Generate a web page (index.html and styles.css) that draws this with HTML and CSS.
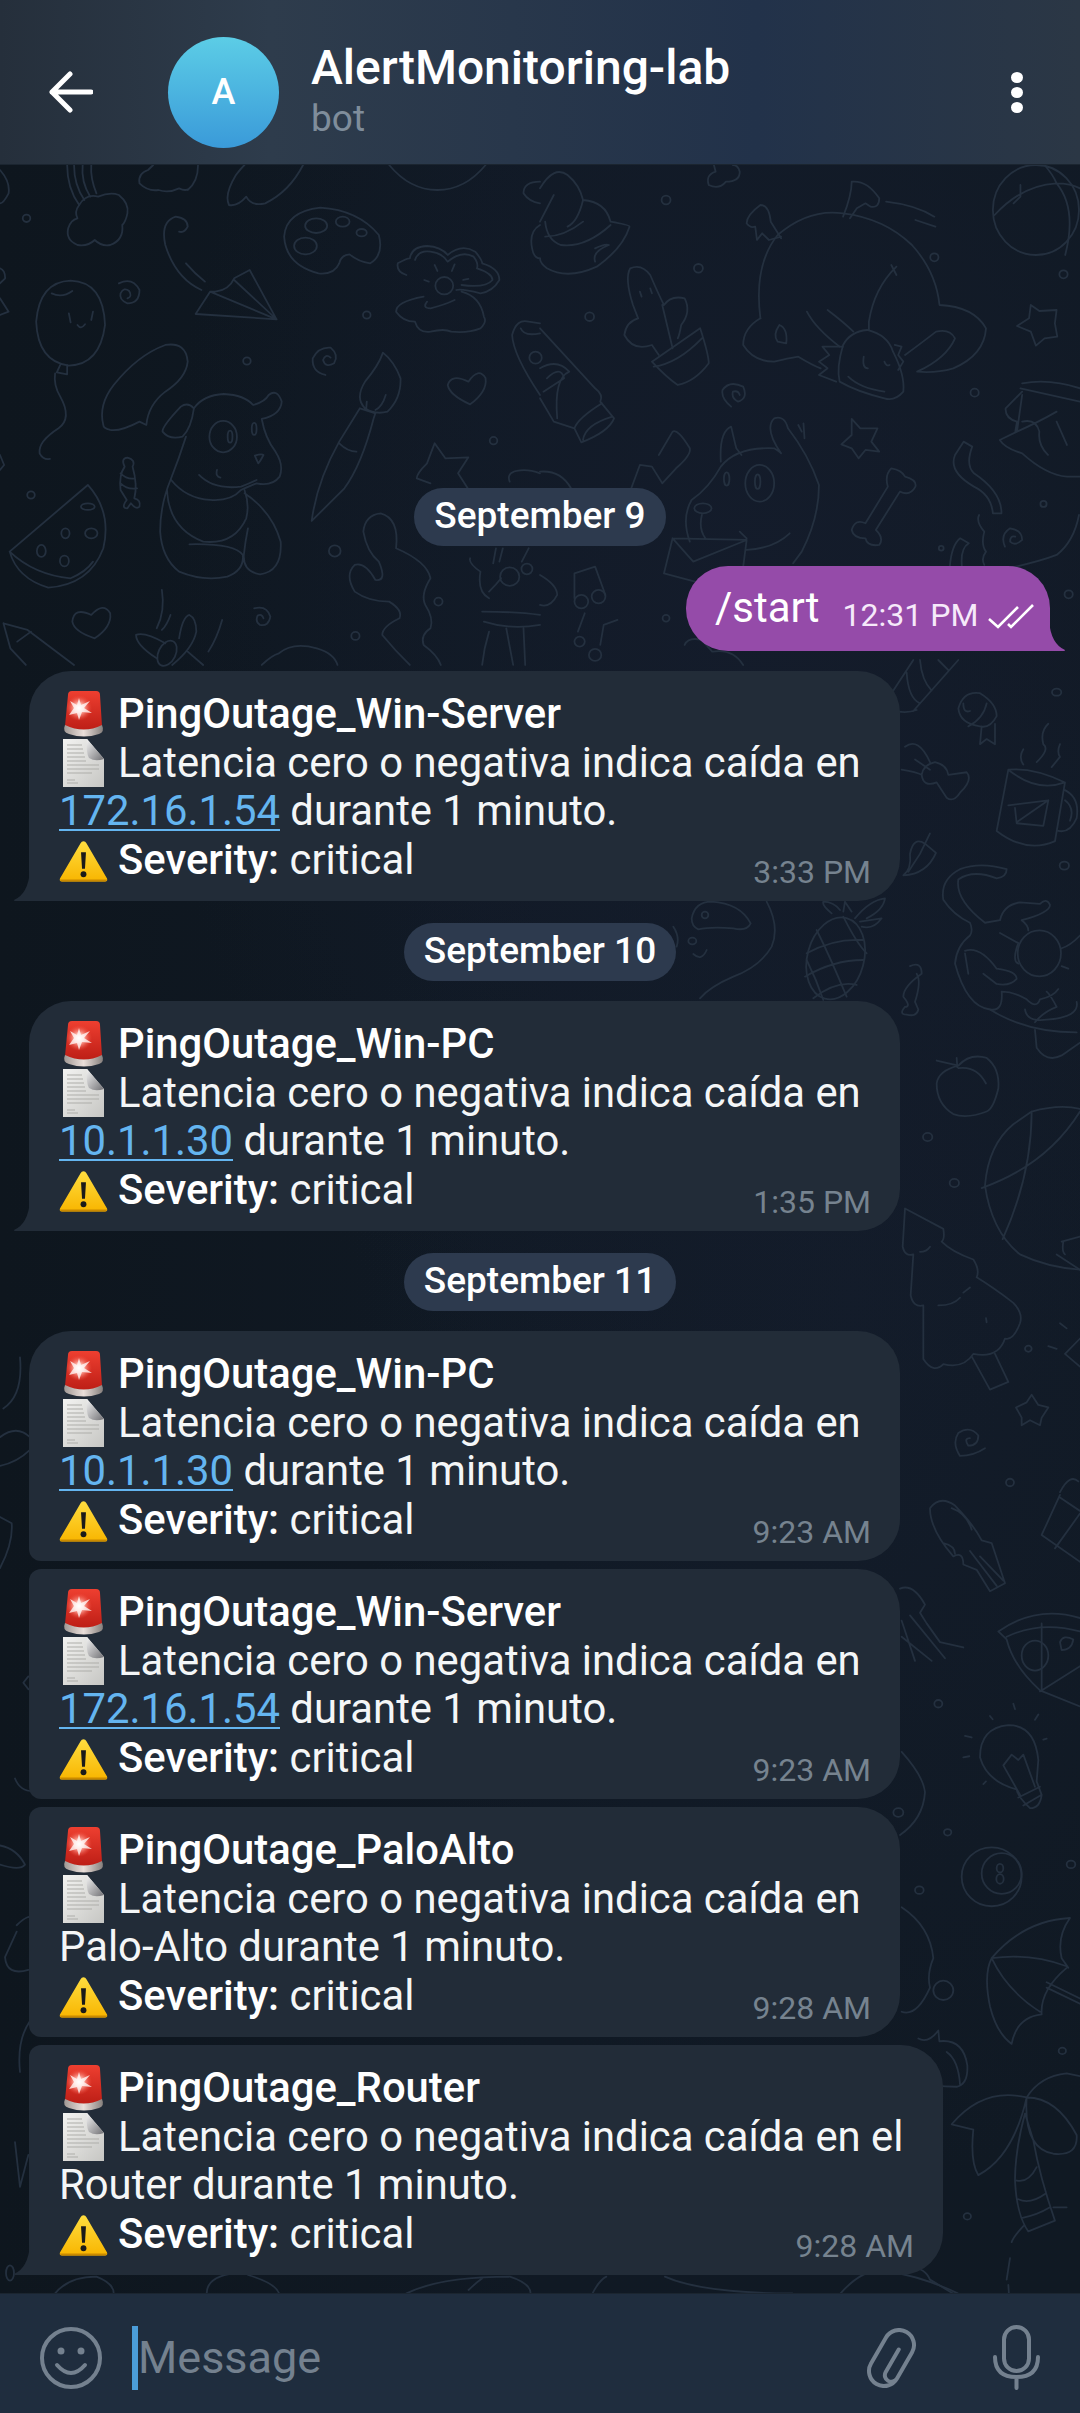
FILE: index.html
```html
<!DOCTYPE html>
<html>
	<head>
		<meta charset="utf-8">
		<title>AlertMonitoring-lab</title>
		<link rel="stylesheet" href="styles.css">
	</head>
	<body>
		<svg width="0" height="0" class="defs">
			<defs>
				<linearGradient id="red" x1="0" y1="0" x2="0" y2="1"><stop offset="0" stop-color="#ee3f30"/><stop offset="1" stop-color="#bd1e16"/></linearGradient>
				<linearGradient id="base" x1="0" y1="0" x2="1" y2="0"><stop offset="0" stop-color="#a09894"/><stop offset=".5" stop-color="#eadfda"/><stop offset="1" stop-color="#857f7c"/></linearGradient>
				<radialGradient id="flash"><stop offset="0" stop-color="#fff"/><stop offset=".35" stop-color="#ffb5aa"/><stop offset="1" stop-color="#f0493a" stop-opacity="0"/></radialGradient>
				<linearGradient id="yellow" x1="0" y1="0" x2="0" y2="1"><stop offset="0" stop-color="#ffdd3f"/><stop offset="1" stop-color="#f8b500"/></linearGradient>
				<linearGradient id="paper" x1="0" y1="0" x2="1" y2="1"><stop offset="0" stop-color="#f3f3f1"/><stop offset="1" stop-color="#c6c6c3"/></linearGradient>
				<linearGradient id="fold" x1="0" y1="0" x2="1" y2="1"><stop offset="0" stop-color="#f4f4f4"/><stop offset="1" stop-color="#707074"/></linearGradient>
				<symbol id="siren" viewBox="0 0 49 49">
					<path d="M9 5Q9 1 13 1H37Q41 1 41 5L43 36Q25 44 6 36Z" fill="url(#red)"/>
					<circle cx="20" cy="18" r="13" fill="url(#flash)"/>
					<path d="M20 8L22 15 31 11 25 18 33 23 23 22 20 30 18 23 10 25 15 18 11 11 18 15Z" fill="#fff" opacity=".75"/>
					<path d="M6 35Q25 44 43 35Q46 42 40 44Q25 49 10 44Q3 42 6 35Z" fill="url(#base)"/>
				</symbol>
				<symbol id="page" viewBox="0 0 49 49">
					<path d="M4 1H28L45 21V49H4Z" fill="url(#paper)"/>
					<path d="M28 1Q27 16 30 20Q36 24 45 21Z" fill="url(#fold)"/>
					<path d="M8 7H23M8 11H24M8 15H25M8 19H26M8 23H27M8 27H40M8 31H40M8 35H33M8 42H16M8 45H19" stroke="#adadaa" stroke-width="1.200"/>
				</symbol>
				<symbol id="warn" viewBox="0 -4 50 49">
					<path d="M25 2Q27 2 28 4L49 40Q50 43 47 43H3Q0 43 1 40L22 4Q23 2 25 2Z" fill="url(#yellow)"/>
					<path d="M1 41Q1 43 3 43H47Q49 43 49 41Z" fill="#c98a00"/>
					<path d="M22.500 13H27.500L26.500 30H23.500Z" fill="#1a1a1a"/>
					<circle cx="25" cy="35.500" r="3" fill="#1a1a1a"/>
				</symbol>
				<symbol id="seen" viewBox="0 0 46 26">
					<path d="M1 16L10 24 30 4M20 21L23 24 45 2" fill="none" stroke="#fff" stroke-width="2.600"/>
				</symbol>
				<symbol id="tail" viewBox="0 0 30 30">
					<path d="M30 0V30H1Q0 30 0 29Q14 23 16 0Z"/>
				</symbol>
			</defs>
		</svg>

		<div class="phone">
			<svg class="doodles" viewBox="0 0 1080 2413" fill="none" stroke-linecap="round" stroke-linejoin="round">
				<!-- top left part -->
				<g transform="translate(0 165) scale(.3444 .3333)">
					<path d="M195 0Q195 70 230 120M215 0Q215 60 245 105M240 0Q235 50 262 95M265 0Q262 40 280 85"/>
					<path d="M230 120Q250 85 285 95Q320 80 345 90Q375 115 370 145Q365 170 355 180Q360 225 320 240Q295 245 275 225Q255 245 225 240Q190 225 198 190Q205 165 225 160Q215 140 230 120Z"/>
					<path d="M405 55Q400 25 430 15L445 0M545 75Q575 50 575 0M405 55Q430 80 460 75Q490 85 520 70Q540 80 550 70"/>
					<path d="M665 120Q650 90 685 30Q700 10 710 0M665 120Q690 125 715 95Q730 125 770 115Q840 80 880 0"/>
					<path d="M1130 0Q1190 75 1270 75Q1350 75 1410 0M1568 50Q1520 50 1520 85Q1535 110 1568 115M1568 180Q1535 200 1545 250Q1550 280 1568 280M0 15Q30 50 25 85Q10 115 0 115M0 310Q15 315 15 340L0 355M0 400L25 440 0 450M0 870L12 900 0 915"/>
					<circle cx="77" cy="160" r="11"/><circle cx="1065" cy="450" r="11"/><circle cx="717" cy="588" r="11"/><circle cx="1433" cy="827" r="11"/><circle cx="90" cy="990" r="11"/><circle cx="972" cy="1158" r="17"/><circle cx="1273" cy="1310" r="12"/><circle cx="1032" cy="1413" r="12"/>
					<path d="M345 355Q385 335 405 375Q405 415 370 415Q345 405 350 385Q360 365 375 378Q385 395 370 400"/>
					<path d="M945 630Q905 620 908 580Q925 545 960 548Q985 570 970 595Q945 610 938 585Q945 565 960 578"/>
					<path d="M738 1330Q775 1320 785 1355Q780 1385 755 1380Q740 1370 748 1352Q760 1345 765 1360"/>
					<path d="M585 375Q510 340 480 240Q465 170 510 155Q545 160 545 185Q535 205 520 200M540 295Q565 325 595 350"/>
					<path d="M568 447L610 380 625 380Q665 375 680 340L725 315 803 463ZM610 380L803 463M680 345L803 463"/>
					<path d="M825 215Q830 140 930 128Q1040 135 1100 210Q1115 270 1075 295Q1040 290 1015 268Q990 270 985 295Q970 330 925 325Q830 300 825 215Z"/>
					<ellipse cx="918" cy="182" rx="32" ry="22"/><ellipse cx="995" cy="170" rx="20" ry="15"/><ellipse cx="1050" cy="203" rx="15" ry="11"/><ellipse cx="887" cy="243" rx="33" ry="25"/>
					<path d="M1180 330Q1150 320 1155 295Q1180 280 1190 280Q1195 245 1240 243Q1280 245 1300 270Q1340 235 1380 260Q1400 285 1400 295Q1450 310 1450 345Q1430 380 1395 385Q1340 370 1325 375M1205 285Q1215 255 1250 260Q1285 265 1300 290Q1340 255 1375 275Q1390 295 1385 310Q1430 325 1430 345Q1410 370 1340 360M1230 395Q1150 410 1150 440Q1170 470 1205 470Q1215 505 1250 500Q1290 490 1310 500Q1360 505 1395 490Q1415 470 1405 455Q1395 395 1340 380M1240 410Q1225 430 1250 430Q1290 420 1320 405M1262 300L1270 318M1320 298L1312 318M1232 345L1245 350M1345 345L1360 342"/>
					<circle cx="1290" cy="362" r="26"/>
					<path d="M205 347Q300 350 305 480Q290 600 200 602Q110 590 105 470Q115 350 205 347ZM150 385Q180 400 210 378M200 445L205 472M270 440L265 465M225 480Q235 495 247 478M175 600L165 622 195 628 195 600M160 625Q155 660 175 695Q210 760 170 790Q110 830 115 865Q125 885 145 882"/>
					<path d="M300 780Q285 720 330 660Q400 570 480 540Q540 530 545 590Q540 640 480 680Q430 720 425 780L405 770Q350 800 320 795Q300 790 300 780Z"/>
					<path d="M563 730Q590 690 650 687Q710 690 735 720Q770 710 780 690Q805 670 818 710Q815 750 760 762Q770 820 800 860Q825 900 812 935Q790 965 745 955Q710 970 700 975Q670 1010 610 1005Q540 1000 497 945"/>
					<path d="M563 730Q545 710 525 725Q470 785 472 800Q490 825 530 815Q555 790 563 730M540 815Q520 880 495 945Q465 1020 465 1100Q470 1180 520 1220Q590 1250 660 1235Q710 1215 705 1170Q680 1135 550 1138M485 975Q490 1090 590 1130Q680 1140 715 1060Q725 1020 710 975M710 985Q790 1040 815 1130Q820 1220 755 1228Q705 1220 708 1170Q712 1130 720 1090"/>
					<ellipse cx="648" cy="815" rx="40" ry="47"/><ellipse cx="668" cy="815" rx="7" ry="18"/><ellipse cx="738" cy="792" rx="7" ry="18"/>
					<path d="M578 930Q620 975 700 965Q725 955 745 945M630 915Q625 935 640 938M740 872Q760 865 765 870Q755 890 750 895Q745 885 740 872Z"/>
					<path d="M1112 563Q1100 600 1060 650Q1030 700 1060 730Q1090 750 1125 740Q1165 700 1163 640Q1145 590 1112 563ZM1045 730L1090 745 1085 760Q1050 900 1000 970L905 1068Q920 950 985 830L1045 730M985 835Q1010 860 1035 860M1065 710L1063 735M1120 690Q1110 725 1090 735"/>
					<path d="M1360 650Q1310 625 1300 660Q1305 690 1365 718Q1415 680 1410 640Q1390 605 1360 650Z"/>
					<path d="M1262 835L1293 880 1360 877 1330 925 1358 970M1262 835Q1245 880 1240 895Q1210 925 1210 940L1250 955"/>
					<path d="M370 878Q350 880 362 905Q345 930 350 975Q365 1000 368 1005Q350 1030 370 1030L380 1015Q395 1035 405 1025Q410 1005 390 1000Q400 960 385 905Q395 885 370 878ZM350 925Q370 945 392 940M350 955Q370 975 398 970"/>
					<path d="M255 960L28 1160Q50 1240 140 1268Q260 1260 300 1150Q325 1040 255 960ZM28 1160Q100 1230 205 1240Q250 1220 270 1190"/>
					<ellipse cx="255" cy="1025" rx="20" ry="10"/><ellipse cx="190" cy="1105" rx="12" ry="15"/><ellipse cx="265" cy="1105" rx="18" ry="15"/><ellipse cx="120" cy="1158" rx="13" ry="18"/><ellipse cx="187" cy="1188" rx="13" ry="16"/>
					<path d="M1105 1045Q1060 1050 1055 1100Q1065 1160 1100 1190Q1125 1250 1090 1245Q1060 1190 1030 1200Q1000 1230 1030 1280Q1070 1310 1130 1310Q1170 1335 1160 1360Q1110 1385 1110 1410Q1150 1460 1190 1500M1105 1045Q1160 1060 1150 1150Q1240 1190 1250 1240Q1220 1290 1235 1320Q1260 1360 1250 1390Q1220 1410 1230 1440Q1270 1470 1280 1500"/>
					<path d="M265 1350Q215 1325 210 1370Q215 1400 275 1420Q325 1385 320 1345Q300 1310 265 1350Z"/>
					<path d="M10 1375L80 1395 215 1500M10 1375L30 1450 75 1500M50 1430L90 1400"/>
					<path d="M470 1275Q480 1340 455 1390M495 1350Q485 1380 470 1395M645 1365Q630 1420 605 1460M395 1410Q420 1400 480 1435M395 1410Q395 1440 455 1480M520 1420Q530 1355 550 1350Q570 1360 570 1400Q560 1450 500 1500M545 1460L590 1500"/>
					<ellipse cx="485" cy="1465" rx="25" ry="40" transform="rotate(25 485 1465)"/>
					<path d="M760 1500Q790 1470 810 1465Q850 1430 920 1450Q970 1465 980 1500"/>
					<path d="M1440 1150L1432 1195M1460 1150L1450 1190M1535 1150L1515 1190M1365 1180Q1360 1195 1395 1220Q1385 1280 1420 1300M1420 1280Q1440 1260 1455 1240M1400 1340Q1500 1340 1568 1350M1405 1370Q1480 1395 1568 1380M1420 1400Q1405 1450 1400 1500M1470 1390L1490 1500M1520 1390L1525 1500"/>
					<circle cx="1480" cy="1235" r="28"/><circle cx="1530" cy="1212" r="16"/>
					<path d="M1480 950Q1470 925 1500 918Q1530 910 1568 925M1568 690Q1490 570 1487 510Q1500 460 1535 470L1568 475M1512 490Q1520 515 1568 505"/>
					<circle cx="1555" cy="578" r="18"/>
				</g>

				<!-- top right part -->
				<g transform="translate(540 165) scale(.3444 .3333)">
					<path d="M0 70Q40 0 80 30Q115 60 125 105Q190 110 205 170Q260 180 260 185Q240 250 165 305Q80 345 20 310Q0 295 0 280M125 105Q110 170 80 185M15 215Q70 215 125 170M15 170Q20 225 60 240Q130 250 205 180M40 90L0 170M160 250Q190 235 200 240Q150 260 160 290"/>
					<path d="M490 60Q480 30 510 20L505 0M490 60Q520 75 540 50Q580 50 580 20Q575 0 560 0"/>
					<circle cx="366" cy="105" r="13"/><circle cx="460" cy="310" r="13"/><circle cx="144" cy="455" r="13"/><circle cx="1145" cy="277" r="12"/><circle cx="1520" cy="328" r="12"/><circle cx="1262" cy="683" r="12"/><circle cx="1462" cy="1017" r="9"/><circle cx="1165" cy="1150" r="7"/><circle cx="1535" cy="1288" r="12"/><circle cx="366" cy="1360" r="10"/>
					<path d="M262 310Q295 295 320 330Q345 390 360 420Q380 390 420 400Q440 440 410 480Q405 510 400 520M262 310Q245 340 270 420L285 460Q250 470 245 510Q270 560 325 540L345 570M355 420L385 550"/>
					<path d="M325 590L465 490Q490 570 490 595Q450 650 400 660Q370 640 325 590ZM330 605Q400 595 470 520M290 380L295 395M320 370L325 385"/>
					<path d="M640 460Q620 300 690 210Q780 130 880 145Q1000 160 1080 240Q1150 320 1160 420Q1260 425 1295 490Q1290 570 1200 610Q1150 625 1095 620Q1180 580 1205 520Q1190 490 1150 500Q1100 540 1060 570"/>
					<path d="M640 460Q590 490 590 540Q620 590 680 590Q720 580 750 575Q790 600 815 610"/>
					<path d="M880 155Q905 90 905 50Q950 45 985 100Q985 130 960 125L945 115 920 130 900 160M700 220L670 170Q665 120 640 120Q600 150 600 175Q610 190 625 185L630 225 645 205 665 225 700 215M1005 110Q1090 120 1145 155M1090 165L1148 185"/>
					<path d="M880 540Q900 500 950 495Q1010 510 1025 560Q1060 630 1055 680Q1030 710 1000 700Q920 680 870 650Q860 610 880 540ZM880 545L820 545 840 570 810 590 835 610 810 630 860 650M1030 540L1050 545 1040 570 1055 590 1040 615M940 575Q935 610 952 610M1000 590Q1005 605 1015 600M895 635Q930 670 1000 680"/>
					<path d="M1035 305Q970 370 955 470L955 495M1020 300L1035 330M775 440Q800 490 870 545M835 435Q880 470 910 500M695 480Q675 510 690 530L715 535Q720 490 695 480"/>
					<ellipse cx="1440" cy="135" rx="125" ry="135"/>
					<path d="M1320 150Q1400 60 1500 55Q1540 55 1568 70M1500 55Q1560 130 1525 270M1395 60L1395 95 1375 115M1465 0Q1490 30 1500 55"/>
					<path d="M0 490L160 670Q185 690 175 710L215 760Q200 800 120 832L100 790 40 770Q0 700 0 700M100 790Q110 760 180 715M0 610Q50 580 85 620Q40 640 50 760M20 640Q60 600 70 640L10 680M125 825Q130 780 210 755"/>
					<path d="M1425 420L1450 438 1500 435 1495 475 1502 515 1465 520 1440 542 1425 500 1385 483 1420 460Z"/>
					<path d="M905 762L930 790 980 790 962 830 985 860 945 855 925 880 905 850 875 838 905 810Z"/>
					<path d="M555 725Q525 700 530 675Q550 645 590 665Q605 700 575 710Q555 700 560 680Q575 675 580 690M1350 1145Q1335 1110 1365 1090Q1400 1095 1400 1125Q1380 1145 1365 1130Q1365 1110 1380 1115"/>
					<path d="M1400 655Q1480 640 1568 670M1395 670Q1480 690 1568 710M1400 680L1352 730Q1350 760 1385 770L1380 800M1400 690L1385 800 1335 825Q1350 850 1400 865Q1470 930 1530 935L1568 935M1400 770Q1440 760 1450 800Q1445 840 1475 870M1500 770L1530 840M1385 800Q1450 770 1500 740"/>
					<path d="M1230 830L1255 845Q1235 900 1260 925Q1340 980 1340 1045L1315 1045Q1310 990 1260 965Q1185 920 1205 870Z"/>
					<path d="M1275 1050Q1265 1070 1290 1100Q1280 1140 1295 1160Q1280 1180 1290 1200M1190 1205Q1195 1140 1220 1120L1245 1135Q1220 1150 1225 1205M1360 1210Q1450 1190 1500 1170Q1550 1130 1565 1050"/>
					<path d="M435 1130Q410 1060 440 1005Q490 970 525 905Q570 845 680 850Q695 860 700 865Q650 790 680 760Q710 750 720 790Q780 870 810 960Q810 1060 760 1160L735 1195M525 890Q520 800 555 785Q565 830 570 850L585 870"/>
					<ellipse cx="638" cy="955" rx="42" ry="55"/><ellipse cx="632" cy="950" rx="8" ry="22"/><ellipse cx="542" cy="942" rx="8" ry="20"/><ellipse cx="473" cy="1030" rx="25" ry="15"/>
					<path d="M470 1050Q460 1090 480 1120M385 1120L360 1225 450 1250M385 1120L445 1190 600 1125 590 1205M385 1120L600 1125M600 1155Q680 1150 725 1105M580 1100L600 1120M750 780L760 800M765 775L768 820"/>
					<path d="M1010 965Q1000 930 1020 910Q1050 915 1060 935Q1095 945 1090 965Q1075 995 1045 980L975 1095Q1000 1120 985 1140Q950 1145 945 1120Q910 1120 905 1095Q915 1060 945 1075Z"/>
					<path d="M345 870L385 800Q400 790 435 850Q440 870 395 910L355 955 325 905 290 900 265 970M0 920Q60 915 90 970"/>
					<path d="M100 1300L100 1225 160 1205 190 1290M130 1345L110 1400M225 1365L185 1380 175 1440M0 1230Q50 1260 50 1290Q30 1330 0 1320"/>
					<circle cx="120" cy="1310" r="20"/><circle cx="170" cy="1295" r="20"/><circle cx="115" cy="1430" r="15"/><circle cx="160" cy="1470" r="18"/>
					<path d="M420 1440Q430 1415 470 1425L500 1460Q560 1450 590 1500"/>
				</g>

				<!-- right side, upper -->
				<g transform="translate(880 660) scale(.3333 .5102)">
					<path d="M40 60L100 0M100 100L235 0M80 25Q85 75 120 85M120 0Q125 40 155 60M175 0L205 20M50 100Q80 105 110 98"/>
					<path d="M235 95Q250 60 300 65Q350 85 350 110Q330 135 300 130Q240 125 235 95ZM305 130L300 165 320 155 345 165 345 125M320 85Q310 115 265 130M250 85Q250 105 270 100"/>
					<path d="M385 215L350 335Q440 380 525 355L555 240Q460 210 385 215ZM385 215Q470 260 555 240M555 255Q600 270 590 310Q570 340 535 335M555 275Q585 290 570 315M385 285L505 275 490 325 410 320 405 290M410 318L505 275M430 175Q415 190 430 205M505 125Q480 140 490 165Q510 175 470 200M540 165Q530 180 540 190L515 210"/>
					<ellipse cx="530" cy="63" rx="14" ry="7"/><ellipse cx="553" cy="403" rx="14" ry="8"/><ellipse cx="143" cy="935" rx="14" ry="8"/><ellipse cx="223" cy="1025" rx="14" ry="8"/><ellipse cx="445" cy="1350" rx="10" ry="6"/>
					<path d="M70 422Q140 420 168 378L135 360Q100 345 90 380Q95 410 70 422ZM150 340L120 380 85 415"/>
					<path d="M75 170Q115 150 150 200M65 215Q110 220 125 225Q130 205 165 200Q200 205 205 225L260 220Q280 235 240 260Q220 280 200 270L170 240Q130 250 125 225M105 195L150 215"/>
					<path d="M90 600Q125 590 125 615Q70 640 70 660Q95 680 75 680Q55 695 80 695Q110 700 115 685L105 670Q125 630 110 615"/>
					<path d="M380 410Q300 395 240 410Q180 430 190 470Q220 500 270 515Q280 530 270 540Q230 560 225 595Q260 680 330 685Q440 730 590 730M380 410Q380 425 350 428Q280 410 235 430Q225 470 315 515L360 510Q370 480 420 475L480 478Q500 465 510 480Q510 495 425 510Q445 520 445 530"/>
					<ellipse cx="478" cy="575" rx="65" ry="45"/>
					<path d="M360 535L415 555M415 555Q395 590 415 595M545 565Q570 560 600 540M545 600L565 605M255 570Q300 560 350 605Q410 610 410 625Q390 640 350 635L310 615M255 575L265 615M330 685Q370 690 365 650Q400 650 440 665Q470 685 480 665Q520 660 535 645M465 710Q490 690 530 680Q510 655 500 650M465 725L470 760Q500 790 545 775L600 750M435 685Q440 710 500 705Q600 700 590 670"/>
					<path d="M170 830Q175 805 235 795Q270 770 320 780Q360 800 355 840Q340 880 320 885Q260 900 220 890Q170 870 170 830ZM235 795L170 785M230 780L232 798M235 800Q290 795 318 830"/>
					<path d="M455 885Q540 870 600 880M315 1030Q325 950 400 910L455 885Q455 1010 368 1135M305 1035Q500 990 600 885M315 1030Q335 1120 420 1165Q500 1190 600 1195"/>
					<path d="M75 1075L190 1115Q195 1135 185 1140Q215 1160 280 1175Q300 1195 290 1210Q340 1230 400 1260Q430 1280 420 1300Q400 1335 375 1330Q355 1370 280 1360Q250 1390 190 1380Q160 1400 130 1370L130 1265Q100 1270 92 1245L100 1165Q75 1170 68 1150L75 1075ZM275 1365L330 1430 385 1415 345 1360M120 1160Q140 1160 150 1150M175 1265Q220 1265 240 1250M250 1240L270 1230M318 1290L320 1298"/>
					<path d="M455 1440L475 1460 505 1465 485 1485 480 1500 450 1490 425 1500 425 1485 408 1465 440 1455ZM315 1545Q280 1560 240 1560Q215 1535 235 1515Q270 1500 295 1520Q295 1540 265 1540Q250 1525 270 1525"/>
					<path d="M600 1330L555 1360 600 1385M540 1300L560 1310M505 1345L530 1350M545 1140L600 1130M530 1165L600 1195M550 1140Q545 1160 555 1165"/>
				</g>

				<!-- right side, lower -->
				<g transform="translate(880 1460) scale(.3333 .5357)">
					<path d="M150 90Q180 65 225 85Q280 120 305 150L335 155 375 230 330 245 290 205 250 195Q250 170 220 180Q150 130 150 90ZM215 90Q260 100 275 130M190 155Q225 160 225 175M270 170L350 235M300 180L370 225"/>
					<ellipse cx="390" cy="42" rx="12" ry="7"/><ellipse cx="175" cy="455" rx="12" ry="7"/><ellipse cx="203" cy="695" rx="11" ry="6"/><ellipse cx="118" cy="803" rx="13" ry="7"/><ellipse cx="573" cy="755" rx="13" ry="7"/><ellipse cx="547" cy="1103" rx="11" ry="6"/><ellipse cx="262" cy="1412" rx="11" ry="6"/>
					<path d="M540 60Q570 25 595 40M485 140L540 65M485 140L600 190M525 165L600 100M540 70L600 95"/>
					<path d="M355 320Q470 270 600 295M355 320L380 335Q400 385 480 430L600 460M380 330Q480 300 600 320M485 305V430M480 432L600 385M540 340Q550 325 580 335Q575 355 545 355Z"/>
					<ellipse cx="465" cy="365" rx="40" ry="28"/>
					<path d="M300 555Q300 500 385 495Q465 495 475 560L470 600 485 625Q480 650 450 650Q415 630 410 615Q320 600 300 555ZM420 625L370 570 395 550 415 560 430 550 465 610M415 630L480 610M430 645L485 625M330 478L338 484M400 455L405 465M465 485L475 475M500 520L490 522M255 515L275 518M250 555L268 553M310 605L318 600"/>
					<ellipse cx="335" cy="778" rx="90" ry="55"/><ellipse cx="365" cy="772" rx="60" ry="38"/><ellipse cx="360" cy="762" rx="10" ry="8"/><ellipse cx="360" cy="782" rx="11" ry="9"/>
					<path d="M335 930Q430 860 570 855Q530 890 545 930L565 948M335 930Q450 920 560 945M335 930Q380 990 480 1030M335 930Q310 960 330 1020Q350 1070 395 1090Q410 1040 485 1035Q480 990 560 948M500 975L600 1005M500 985L600 1015"/>
					<path d="M440 1190Q480 1150 560 1145L600 1150M440 1190Q530 1190 590 1260Q595 1300 520 1295Q430 1285 440 1190M440 1190Q310 1170 215 1240L280 1250M280 1250Q270 1310 295 1335Q400 1300 440 1190M435 1220Q405 1290 405 1345Q410 1410 445 1440L525 1420Q480 1340 460 1270ZM410 1345Q445 1350 470 1320M415 1380Q450 1390 495 1370M425 1415Q470 1410 510 1395M430 1430Q400 1450 395 1460M520 1395L560 1395M390 1490L380 1530M385 1540L388 1568"/>
					<path d="M115 1080Q145 1090 175 1065L178 1085Q250 1080 262 1130Q265 1165 230 1170Q165 1170 65 1160M200 1105Q235 1120 240 1165"/>
					<path d="M65 545Q130 590 135 620Q130 670 60 700M65 835Q150 870 160 930Q140 960 150 985Q110 1040 65 1030M60 240Q100 230 135 270L120 285 140 305 180 340 250 350M65 300L105 375M65 330L155 375M90 290L195 370M60 1510Q130 1500 150 1530L230 1560"/>
					<ellipse cx="55" cy="658" rx="15" ry="8"/><ellipse cx="190" cy="990" rx="30" ry="18"/>
				</g>

				<!-- left side in the gaps -->
				<g transform="translate(0 1300) scale(.3333 .638)">
					<path d="M60 90Q70 150 10 170M0 215Q50 195 90 215M0 260Q50 255 90 235M0 340L35 350Q40 380 0 420M85 590L70 600 85 610M45 750Q60 770 100 770M0 855Q50 860 75 885Q60 895 0 885M50 980Q90 960 100 970M15 1030Q20 1060 85 1050M15 1030L50 990M90 1130Q50 1160 60 1210M45 1320L60 1390 85 1340"/>
					<circle cx="30" cy="1525" r="12"/>
				</g>

				<!-- gap under the first message -->
				<g transform="translate(640 830) scale(.3333)">
					<path d="M155 265Q165 215 215 215Q300 220 332 280Q320 305 280 295Q210 290 175 298Q155 290 155 265ZM160 372Q185 395 200 360M380 215Q420 290 395 350Q360 410 280 440Q210 470 180 505"/>
					<circle cx="195" cy="255" r="10"/><ellipse cx="157" cy="333" rx="12" ry="10"/>
					<ellipse cx="587" cy="385" rx="85" ry="125" transform="rotate(15 587 385)"/>
					<path d="M500 370Q580 325 670 330M495 440Q580 390 670 390M520 505Q590 450 650 465M530 300Q570 380 620 500M500 390Q530 450 550 510M610 260Q650 340 680 370M575 250Q545 225 550 215Q580 215 600 240M610 245L615 215 635 245M645 265Q690 210 735 205Q730 240 680 265M660 275L725 265Q700 300 665 290M100 290Q120 320 110 350"/>
				</g>

				<!-- bottom edge -->
				<g transform="translate(0 2250) scale(.689 .3333)">
					<path d="M80 130Q100 80 140 80Q165 100 165 130M300 130Q300 80 340 70M360 75Q400 100 405 130M590 130Q640 80 740 80Q770 100 770 130M680 120Q690 100 700 85M860 130Q870 90 880 80M965 80Q1020 130 1150 130M1220 130Q1250 60 1280 60Q1340 80 1390 130"/>
				</g>
			</svg>

			<header class="topbar">
				<svg class="back" viewBox="0 0 44 42" fill="none" stroke="#fff" stroke-width="5" stroke-linecap="round" stroke-linejoin="round"><path d="M3 21H42M21 3L3 21 21 39"/></svg>
				<div class="avatar">A</div>
				<div class="who">
					<div class="name">AlertMonitoring-lab</div>
					<div class="status">bot</div>
				</div>
				<div class="dots"><i></i><i></i><i></i></div>
			</header>

			<main class="chat">
				<div class="date">September 9</div>
				<div class="out">
					<span class="out-text">/start</span>
					<span class="out-time">12:31 PM</span>
					<svg class="seen"><use href="#seen"/></svg>
					<svg class="tail tail-out"><use href="#tail"/></svg>
				</div>

				<div class="msg">
					<div class="line"><svg class="emo"><use href="#siren"/></svg><b>PingOutage_Win-Server</b></div>
					<div class="line"><svg class="emo"><use href="#page"/></svg>Latencia cero o negativa indica caída en</div>
					<div class="line"><a>172.16.1.54</a>&nbsp;durante 1 minuto.</div>
					<div class="line"><svg class="emo"><use href="#warn"/></svg><b>Severity:</b>&nbsp;critical</div>
					<span class="time">3:33 PM</span>
					<svg class="tail tail-in"><use href="#tail"/></svg>
				</div>

				<div class="date date-next">September 10</div>
				<div class="msg">
					<div class="line"><svg class="emo"><use href="#siren"/></svg><b>PingOutage_Win-PC</b></div>
					<div class="line"><svg class="emo"><use href="#page"/></svg>Latencia cero o negativa indica caída en</div>
					<div class="line"><a>10.1.1.30</a>&nbsp;durante 1 minuto.</div>
					<div class="line"><svg class="emo"><use href="#warn"/></svg><b>Severity:</b>&nbsp;critical</div>
					<span class="time">1:35 PM</span>
					<svg class="tail tail-in"><use href="#tail"/></svg>
				</div>

				<div class="date date-next">September 11</div>
				<div class="msg msg-first">
					<div class="line"><svg class="emo"><use href="#siren"/></svg><b>PingOutage_Win-PC</b></div>
					<div class="line"><svg class="emo"><use href="#page"/></svg>Latencia cero o negativa indica caída en</div>
					<div class="line"><a>10.1.1.30</a>&nbsp;durante 1 minuto.</div>
					<div class="line"><svg class="emo"><use href="#warn"/></svg><b>Severity:</b>&nbsp;critical</div>
					<span class="time">9:23 AM</span>
				</div>
				<div class="msg msg-mid">
					<div class="line"><svg class="emo"><use href="#siren"/></svg><b>PingOutage_Win-Server</b></div>
					<div class="line"><svg class="emo"><use href="#page"/></svg>Latencia cero o negativa indica caída en</div>
					<div class="line"><a>172.16.1.54</a>&nbsp;durante 1 minuto.</div>
					<div class="line"><svg class="emo"><use href="#warn"/></svg><b>Severity:</b>&nbsp;critical</div>
					<span class="time">9:23 AM</span>
				</div>
				<div class="msg msg-mid">
					<div class="line"><svg class="emo"><use href="#siren"/></svg><b>PingOutage_PaloAlto</b></div>
					<div class="line"><svg class="emo"><use href="#page"/></svg>Latencia cero o negativa indica caída en</div>
					<div class="line">Palo-Alto durante 1 minuto.</div>
					<div class="line"><svg class="emo"><use href="#warn"/></svg><b>Severity:</b>&nbsp;critical</div>
					<span class="time">9:28 AM</span>
				</div>
				<div class="msg msg-last">
					<div class="line"><svg class="emo"><use href="#siren"/></svg><b>PingOutage_Router</b></div>
					<div class="line"><svg class="emo"><use href="#page"/></svg>Latencia cero o negativa indica caída en el</div>
					<div class="line">Router durante 1 minuto.</div>
					<div class="line"><svg class="emo"><use href="#warn"/></svg><b>Severity:</b>&nbsp;critical</div>
					<span class="time">9:28 AM</span>
					<svg class="tail tail-in"><use href="#tail"/></svg>
				</div>
			</main>

			<footer class="composer">
				<svg class="ico-smile" viewBox="0 0 62 62" fill="none" stroke="#74818f" stroke-width="4" stroke-linecap="round"><circle cx="31" cy="31" r="29"/><path d="M17 38Q31 54 45 38"/><circle cx="21" cy="24" r="3.500" fill="#74818f" stroke="none"/><circle cx="41" cy="24" r="3.500" fill="#74818f" stroke="none"/></svg>
				<div class="field"><i class="caret"></i><span>Message</span></div>
				<svg class="ico-clip" viewBox="0 0 51 60" fill="none" stroke="#74818f" stroke-width="4" stroke-linecap="round" stroke-linejoin="round"><path transform="translate(25.500 30) rotate(30)" d="M2 -11V15A6.500 6.500 0 0 0 15 15V-15A15 15 0 0 0 -15 -15V15A15 15 0 0 0 15 15"/></svg>
				<svg class="ico-mic" viewBox="0 0 47 65" fill="none" stroke="#74818f" stroke-width="4" stroke-linecap="round"><rect x="11" y="2" width="25" height="44" rx="12.500"/><path d="M2 32Q2 52 23.500 52Q45 52 45 32M23.500 52V63"/></svg>
			</footer>
		</div>
	</body>
</html>
```

FILE: styles.css
```css
*{margin: 0;padding: 0;box-sizing: border-box;}
html,body{height: 100%;}
body{
	background: #111a25;
	color: #fff;
	font-family: Roboto, "Noto Sans", sans-serif;
}
b{font-weight: 500;}
.defs{display: block;height: 0;}
.phone{
	position: relative;
	width: 1080px;
	height: 2413px;
	display: flex;
	flex-direction: column;
	overflow: hidden;
	background:
		radial-gradient(ellipse 600px 900px at 760px 600px, #141c2b, rgba(20,28,43,0)),
		radial-gradient(ellipse 500px 900px at 850px 1300px, #131c2a, rgba(19,28,42,0)),
		linear-gradient(90deg, #0e161e 0, #101924 50%, #101923 100%);
}
.doodles{
	position: absolute;
	left: 0;
	top: 0;
	width: 1080px;
	height: 2413px;
	stroke: #24303f;
	stroke-width: 1.800px;
}
.doodles *{vector-effect: non-scaling-stroke;}

/* header */
.topbar{
	position: relative;
	height: 165px;
	flex: none;
	display: flex;
	align-items: center;
	padding: 20px 0 0 49px;
	background: linear-gradient(90deg, #252f3b 0, #2e3c4c 25%, #22324a 70%, #2b3745 100%);
	border-bottom: 1px solid #1b2530;
}
.back{width: 44px;height: 42px;}
.avatar{
	width: 111px;
	height: 111px;
	margin-left: 75px;
	border-radius: 50%;
	background: linear-gradient(180deg, #5ccde6, #3a9ad9);
	display: flex;
	align-items: center;
	justify-content: center;
	font-size: 36px;
	font-weight: 500;
}
.who{margin-left: 32px;margin-top: -3px;}
.name{
	font-size: 48px;
	font-weight: 500;
	line-height: 56px;
}
.status{
	font-size: 37px;
	line-height: 46px;
	color: #7f8d9b;
}
.dots{
	margin-left: auto;
	margin-right: 57px;
	display: flex;
	flex-direction: column;
	gap: 4px;
}
.dots i{
	width: 12px;
	height: 11px;
	border-radius: 50%;
	background: #fff;
}

/* messages */
.chat{
	position: relative;
	flex: 1;
	display: flex;
	flex-direction: column;
	justify-content: flex-end;
	padding: 0 0 18px 29px;
}
.date{
	align-self: center;
	margin-left: -29px;
	height: 58px;
	line-height: 56px;
	padding: 0 20px;
	border-radius: 29px;
	background: #2d3a4e;
	font-size: 37px;
	font-weight: 500;
	margin-bottom: 20px;
}
.date-next{margin-top: 22px;}
.out{
	position: relative;
	align-self: flex-end;
	width: 364px;
	height: 85px;
	margin: 0 30px 20px 0;
	padding: 0 0 0 29px;
	background: #954ba9;
	border-radius: 42px 42px 0 42px;
	display: flex;
	align-items: center;
}
.out-text{font-size: 42px;margin-top: -2px;}
.out-time{font-size: 32px;margin: 13px 0 0 23px;color: #f6e9fa;}
.seen{width: 46px;height: 26px;margin: 14px 0 0 10px;flex: none;}
.tail{position: absolute;bottom: 0;width: 30px;height: 30px;}
.tail-out{right: -15px;fill: #954ba9;transform: scaleX(-1);}
.tail-in{left: -15px;fill: #222c38;}
.msg{
	position: relative;
	width: 871px;
	height: 230px;
	padding: 19px 0 0 30px;
	background: #222c38;
	border-radius: 42px 42px 42px 0;
}
.msg-first{border-radius: 42px 42px 42px 12px;margin-bottom: 8px;}
.msg-mid{border-radius: 12px 42px 42px 12px;margin-bottom: 8px;}
.msg-last{border-radius: 12px 42px 42px 0;width: 914px;}
.line{
	height: 48.500px;
	line-height: 48.500px;
	font-size: 41.800px;
	color: #f4f6f7;
	white-space: nowrap;
	display: flex;
	align-items: center;
}
.line b{color: #fff;}
.line a{
	color: #64b5f0;
	text-decoration: underline;
	text-underline-offset: 4px;
	text-decoration-thickness: 2px;
}
.emo{
	width: 49px;
	height: 49px;
	flex: none;
	margin-right: 10px;
}
.time{
	position: absolute;
	right: 29px;
	bottom: 10px;
	font-size: 32px;
	color: #76838f;
}

/* composer */
.composer{
	position: relative;
	flex: none;
	height: 120px;
	display: flex;
	align-items: center;
	padding: 8px 40px 0 40px;
	background: #1f2d3e;
	border-top: 1px solid #1b2530;
}
.ico-smile{width: 62px;height: 62px;}
.field{
	flex: 1;
	display: flex;
	align-items: center;
	margin-left: 30px;
	font-size: 45px;
	color: #74818f;
}
.caret{
	width: 6px;
	height: 64px;
	background: #4b9dd9;
}
.ico-clip{width: 51px;height: 60px;margin-right: 76px;}
.ico-mic{width: 47px;height: 65px;}
```
